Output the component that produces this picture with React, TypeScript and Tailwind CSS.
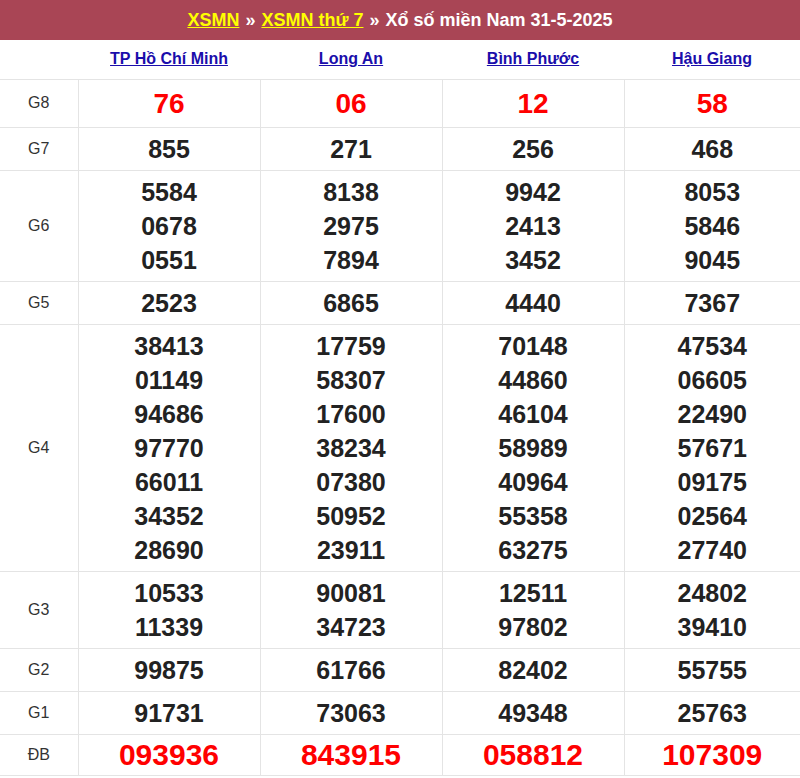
const cols = ["TP Hồ Chí Minh", "Long An", "Bình Phước", "Hậu Giang"];
const rows: { l: string; v: string[][]; red?: boolean; big?: boolean }[] = [
  { l: "G8", v: [["76"], ["06"], ["12"], ["58"]], red: true },
  { l: "G7", v: [["855"], ["271"], ["256"], ["468"]] },
  { l: "G6", v: [["5584", "0678", "0551"], ["8138", "2975", "7894"], ["9942", "2413", "3452"], ["8053", "5846", "9045"]] },
  { l: "G5", v: [["2523"], ["6865"], ["4440"], ["7367"]] },
  { l: "G4", v: [
    ["38413", "01149", "94686", "97770", "66011", "34352", "28690"],
    ["17759", "58307", "17600", "38234", "07380", "50952", "23911"],
    ["70148", "44860", "46104", "58989", "40964", "55358", "63275"],
    ["47534", "06605", "22490", "57671", "09175", "02564", "27740"]] },
  { l: "G3", v: [["10533", "11339"], ["90081", "34723"], ["12511", "97802"], ["24802", "39410"]] },
  { l: "G2", v: [["99875"], ["61766"], ["82402"], ["55755"]] },
  { l: "G1", v: [["91731"], ["73063"], ["49348"], ["25763"]] },
  { l: "ĐB", v: [["093936"], ["843915"], ["058812"], ["107309"]], red: true, big: true },
];
export default function App() {
  return (
    <div className="w-[800px] bg-white" style={{ fontFamily: "'Liberation Sans', Arial, sans-serif" }}>
      <div className="h-[40px] bg-[#a94555] flex items-center justify-center text-white font-bold text-[18px]">
        <span className="text-[#ffff00] underline">XSMN</span>
        <span className="mx-[6px]">»</span>
        <span className="text-[#ffff00] underline">XSMN thứ 7</span>
        <span className="mx-[6px]">»</span>
        <span>Xổ số miền Nam 31-5-2025</span>
      </div>
      <table className="w-full border-collapse table-fixed">
        <colgroup>
          <col className="w-[78px]" />
          <col className="w-[182px]" /><col className="w-[182px]" /><col className="w-[182px]" /><col />
        </colgroup>
        <tbody>
          <tr className="h-[39px] border-b border-[#e4e4e4]">
            <td></td>
            {cols.map(c => (
              <td key={c} className="text-center text-[#1a0dab] underline text-[16px] font-bold">{c}</td>
            ))}
          </tr>
          {rows.map(r => (
            <tr key={r.l} className="border-b border-[#e4e4e4]">
              <td className="text-center text-[#333] text-[16px] border-r border-[#e4e4e4]">{r.l}</td>
              {r.v.map((c, i) => (
                <td key={i} className={`text-center font-bold py-[4px] border-r border-[#e4e4e4] last:border-r-0 ${r.red ? "text-[#ff0000]" : "text-[#222]"} ${r.red ? (r.big ? "text-[30px] leading-[32px]" : "text-[28px] leading-[39px]") : "text-[25px] leading-[34px]"}`}>
                  {c.map(n => <div key={n}>{n}</div>)}
                </td>
              ))}
            </tr>
          ))}
        </tbody>
      </table>
    </div>
  );
}
